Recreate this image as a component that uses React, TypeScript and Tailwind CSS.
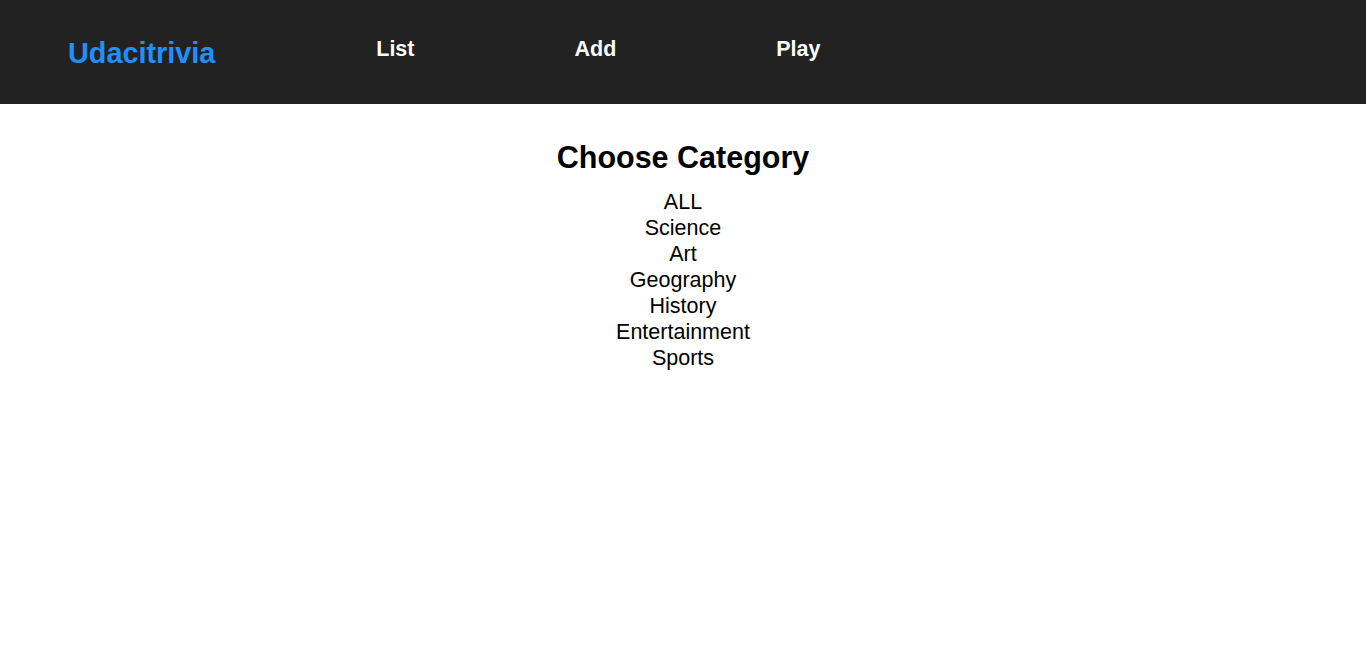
const categories = ["ALL", "Science", "Art", "Geography", "History", "Entertainment", "Sports"];

export default function App() {
  return (
    <div className="min-h-screen bg-white font-['Liberation_Sans',Arial,sans-serif]">
      {/* Header */}
      <header className="flex h-[104px] items-start bg-[#222222] pl-[68px]">
        <h1 className="mt-[36px] text-[28.8px] font-bold leading-[34px] text-[#1e90ff]">Udacitrivia</h1>
        <nav className="ml-[161px] mt-[36px] flex gap-[160px]">
          {["List", "Add", "Play"].map((item) => (
            <h2 key={item} className="cursor-pointer text-[21.5px] font-bold leading-[26px] text-white">
              {item}
            </h2>
          ))}
        </nav>
      </header>

      {/* Category picker */}
      <main className="flex flex-col items-center pt-[35px]">
        <h2 className="text-[30.5px] font-bold leading-[36px] text-black">Choose Category</h2>
        <div className="mt-[14px] flex flex-col items-center">
          {categories.map((c) => (
            <div key={c} className="cursor-pointer text-[21.5px] leading-[26px] text-black">
              {c}
            </div>
          ))}
        </div>
      </main>
    </div>
  );
}
